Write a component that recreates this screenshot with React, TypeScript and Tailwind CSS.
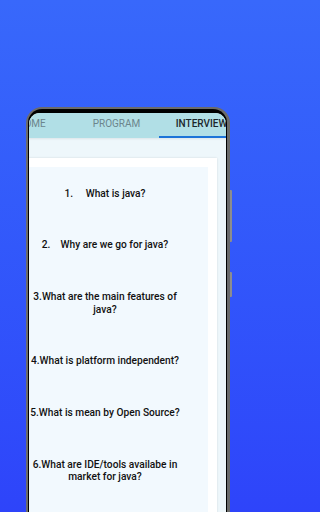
import React from "react";

const questions: string[][] = [
  ["1.     What is java?"],
  ["2.    Why are we go for java?"],
  ["3.What are the main features of", "java?"],
  ["4.What is platform independent?"],
  ["5.What is mean by Open Source?"],
  ["6.What are IDE/tools availabe in", "market for java?"],
];

const tabs = ["HOME", "PROGRAM", "INTERVIEW"];

export default function App() {
  return (
    <div
      className="flex h-[512px] w-full min-w-[256px] overflow-hidden bg-linear-to-b from-[#3868fb] to-[#2e44fa] pl-[26px] pt-[107px]"
      style={{ fontFamily: "Roboto, 'Liberation Sans', sans-serif" }}
    >
      <div className="relative h-[420px] w-[204px] shrink-0 rounded-t-[16px] bg-[#6b6b6b] pl-[2px] pr-[3px] pt-[2px]">
        <div className="h-full rounded-t-[14px] bg-black px-[1px] pt-[4px]">
          <div className="h-full overflow-hidden rounded-t-[11px] bg-[#eef7fb]">
            <div className="h-[25px] bg-[#b1dfe6] shadow-[0_1px_2px_rgba(0,0,0,0.08)]">
              <div className="ml-[-40px] flex h-full">
                {tabs.map((t, i) => (
                  <div key={t} className="flex h-full w-[85px] shrink-0 flex-col items-center pt-[5px]">
                    <span
                      className={
                        "whitespace-nowrap text-[10px] leading-[12px] " +
                        (i === 2 ? "font-medium text-[#1b262b]" : "text-[#6c858c]")
                      }
                    >
                      {t}
                    </span>
                    <div className={"mt-auto h-[2px] w-full " + (i === 2 ? "bg-[#1c74d8]" : "")} />
                  </div>
                ))}
              </div>
            </div>
            <div className="flex pt-[20px]">
              <div className="ml-[-36px] w-[224px] shrink-0 bg-white p-[9px] shadow-[0_0_2px_rgba(0,0,0,0.12)]">
                <div className="h-[400px] bg-[#f2f9fe] pt-[1px]">
                  {questions.map((q, i) => (
                    <div
                      key={i}
                      className="whitespace-pre py-[19.5px] text-center text-[10.2px] font-medium leading-[12.7px] text-[#111111]"
                    >
                      {q.map((l, j) => (
                        <div key={j}>{l}</div>
                      ))}
                    </div>
                  ))}
                </div>
              </div>
            </div>
          </div>
        </div>
        <div className="absolute right-[-2px] top-[83px] h-[52px] w-[2px] rounded-r-[1px] bg-[#8d8d8d]" />
        <div className="absolute right-[-2px] top-[165px] h-[25px] w-[2px] rounded-r-[1px] bg-[#8d8d8d]" />
      </div>
    </div>
  );
}
